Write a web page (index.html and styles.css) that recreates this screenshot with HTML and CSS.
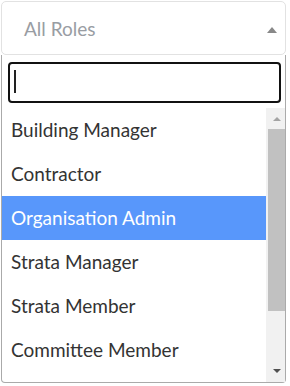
FILE: index.html
```html
<!DOCTYPE html>
<html lang="en">
<head>
<meta charset="utf-8">
<title>All Roles</title>
<link rel="stylesheet" href="styles.css">
</head>
<body>
<div class="select">
  <span class="placeholder">All Roles</span>
  <span class="arrow"></span>
</div>
<div class="dropdown">
  <div class="search-wrap">
    <input class="search" type="text" aria-label="Search roles">
    <span class="caret"></span>
  </div>
  <div class="results-wrap">
    <ul class="results">
      <li class="option">Building Manager</li>
      <li class="option">Contractor</li>
      <li class="option highlighted">Organisation Admin</li>
      <li class="option">Strata Manager</li>
      <li class="option">Strata Member</li>
      <li class="option">Committee Member</li>
    </ul>
    <div class="scrollbar" aria-hidden="true">
      <div class="sb-btn"><span class="tri-up"></span></div>
      <div class="sb-track"><div class="sb-thumb"></div></div>
      <div class="sb-btn"><span class="tri-down"></span></div>
    </div>
  </div>
</div>
</body>
</html>
```
FILE: styles.css
```css
html, body {
  margin: 0;
  padding: 0;
  background: #ffffff;
}
body {
  width: 290px;
  height: 386px;
  overflow: hidden;
  font-family: Lato, "Open Sans", sans-serif;
}
.select {
  box-sizing: border-box;
  margin: 1px 0 0 1px;
  width: 285px;
  height: 54px;
  border: 1px solid #e2e2e2;
  border-radius: 5px;
  display: flex;
  align-items: center;
  justify-content: space-between;
  padding: 0 8px 0 22px;
}
.placeholder {
  font-size: 19px;
  color: #999da3;
}
.arrow {
  width: 0;
  height: 0;
  border-left: 5.5px solid transparent;
  border-right: 5.5px solid transparent;
  border-bottom: 6px solid #888888;
  margin-top: 3px;
}
.dropdown {
  box-sizing: border-box;
  margin-left: 1px;
  width: 285px;
  height: 328px;
  border: 1px solid #aaaaaa;
  border-top: none;
  border-radius: 0 0 4px 4px;
  display: flex;
  flex-direction: column;
}
.search-wrap {
  position: relative;
  padding: 7px 4px 5px 6px;
}
.search {
  box-sizing: border-box;
  display: block;
  width: 100%;
  height: 41px;
  margin: 0;
  border: 2px solid #111111;
  border-radius: 4px;
  outline: none;
  padding: 0 5px;
  font-family: Lato, sans-serif;
  font-size: 19px;
}
.caret {
  position: absolute;
  left: 12px;
  top: 15px;
  width: 2px;
  height: 23px;
  background: #222222;
}
.results-wrap {
  display: flex;
  height: 274px;
}
.results {
  flex: 1;
  list-style: none;
  margin: 0;
  padding: 0;
  overflow: hidden;
}
.option {
  height: 44px;
  line-height: 44px;
  padding: 0 9px;
  font-size: 19px;
  color: #333333;
  white-space: nowrap;
}
.option.highlighted {
  background: #5897fb;
  color: #ffffff;
}
.scrollbar {
  width: 19px;
  background: #f1f1f1;
  display: flex;
  flex-direction: column;
}
.sb-btn {
  height: 20px;
  display: flex;
  justify-content: center;
  align-items: center;
  padding-left: 2px;
}
.sb-track {
  flex: 1;
  padding-left: 2px;
}
.sb-thumb {
  height: 182px;
  margin-top: 1px;
  background: #c1c1c1;
}
.tri-up {
  width: 0;
  height: 0;
  border-left: 4px solid transparent;
  border-right: 4px solid transparent;
  border-bottom: 4px solid #a3a3a3;
  margin-top: 2px;
}
.tri-down {
  width: 0;
  height: 0;
  border-left: 4px solid transparent;
  border-right: 4px solid transparent;
  border-top: 4px solid #505050;
  margin-top: -2px;
}
```
